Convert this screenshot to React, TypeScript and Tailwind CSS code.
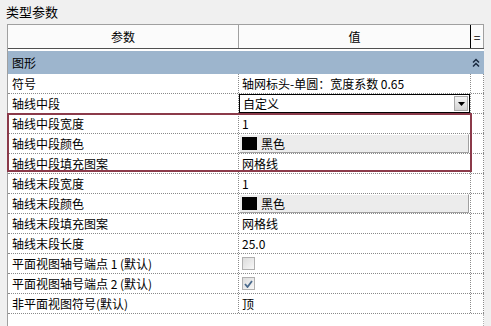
import React from "react"

type Row = { name: string; kind: "text" | "select" | "color" | "check"; value?: string; checked?: boolean }

const rows: Row[] = [
  { name: "符号", kind: "text", value: "轴网标头-单圆：宽度系数 0.65" },
  { name: "轴线中段", kind: "select", value: "自定义" },
  { name: "轴线中段宽度", kind: "text", value: "1" },
  { name: "轴线中段颜色", kind: "color", value: "黑色" },
  { name: "轴线中段填充图案", kind: "text", value: "网格线" },
  { name: "轴线末段宽度", kind: "text", value: "1" },
  { name: "轴线末段颜色", kind: "color", value: "黑色" },
  { name: "轴线末段填充图案", kind: "text", value: "网格线" },
  { name: "轴线末段长度", kind: "text", value: "25.0" },
  { name: "平面视图轴号端点 1 (默认)", kind: "check", checked: false },
  { name: "平面视图轴号端点 2 (默认)", kind: "check", checked: true },
  { name: "非平面视图符号(默认)", kind: "text", value: "顶" },
]

const ValueCell = ({ row }: { row: Row }) => {
  if (row.kind === "select") {
    return (
      <div className="h-full flex items-center justify-between border border-black bg-white pl-[3px] pr-[1px]">
        <span>{row.value}</span>
        <div className="w-[14px] h-[15px] bg-gradient-to-b from-[#f4f4f4] to-[#d4d4d4] border border-[#a8a8a8] flex items-center justify-center">
          <svg width="7" height="4" viewBox="0 0 7 4"><path d="M0 0h7L3.5 4z" fill="#000" /></svg>
        </div>
      </div>
    )
  }
  if (row.kind === "color") {
    return (
      <div className="h-full flex items-center gap-[4px] bg-[#ececec] border-t border-l border-t-white border-l-white border-r border-b border-r-[#a0a0a0] border-b-[#a0a0a0] pl-[2px] mr-[1px]">
        <div className="w-[15px] h-[13px] bg-black" />
        <span>{row.value}</span>
      </div>
    )
  }
  if (row.kind === "check") {
    return (
      <div className="h-full flex items-center pl-[3px]">
        <div className="w-[13px] h-[13px] border border-[#b0b0b0] bg-gradient-to-br from-[#dcdcdc] to-[#f8f8f8] flex items-center justify-center">
          {row.checked && (
            <svg width="9" height="8" viewBox="0 0 9 8"><path d="M1 4l2.5 3L8 1" stroke="#4a6a8c" strokeWidth="1.8" fill="none" /></svg>
          )}
        </div>
      </div>
    )
  }
  return <div className="h-full flex items-center pl-[3px]">{row.value}</div>
}

const App = () => {
  return (
    <div className="w-[491px] h-[326px] bg-[#f0f0f0] overflow-hidden text-[12px] text-black" style={{ fontFamily: '"Noto Sans CJK SC", "Noto Sans", sans-serif' }}>
      {/* Title */}
      <div className="h-[24px] pl-[6px] pt-[4px] leading-[16px] text-[13px]">类型参数</div>

      {/* Property table */}
      <div className="relative ml-[7px] w-[477px] h-[302px] bg-white border-l border-t border-[#a0a0a0]">
        <div className="flex h-[24px] bg-[#fbfbfb] border-b border-[#505050]">
          <div className="w-[231px] flex items-center justify-center border-r border-[#a0a0a0]">参数</div>
          <div className="w-[232px] flex items-center justify-center border-r border-black">值</div>
          <div className="w-[13px] flex items-center justify-center border-r border-[#a0a0a0]">=</div>
        </div>
        <div className="h-[2px]" />
        <div className="flex items-center justify-between h-[23px] bg-[#9db5cd] pl-[4px] pr-[4px]">
          <span>图形</span>
          <svg width="8" height="10" viewBox="0 0 8 10">
            <path d="M1 4.5L4 1.5L7 4.5M1 8.5L4 5.5L7 8.5" stroke="#1a2a40" strokeWidth="1.5" fill="none" />
          </svg>
        </div>

        {rows.map((row) => (
          <div key={row.name} className="flex h-[20px] border-b border-dotted border-[#8a8a8a]">
            <div className="w-[231px] flex items-center pl-[4px] border-r border-dotted border-[#8a8a8a] whitespace-nowrap">{row.name}</div>
            <div className="w-[232px] border-r border-dotted border-[#8a8a8a] whitespace-nowrap">
              <ValueCell row={row} />
            </div>
            <div className="w-[13px] border-r border-dotted border-[#8a8a8a]" />
          </div>
        ))}
        <div className="flex h-[12px]">
          <div className="w-[463px]" />
          <div className="w-[13px] border-r border-dotted border-[#b0b0b0]" />
        </div>

        {/* highlight box */}
        <div className="absolute left-[-1px] top-[88px] w-[465px] h-[59px] border-2 border-[#8b3a4a]" />
      </div>
    </div>
  )
}

export default App
